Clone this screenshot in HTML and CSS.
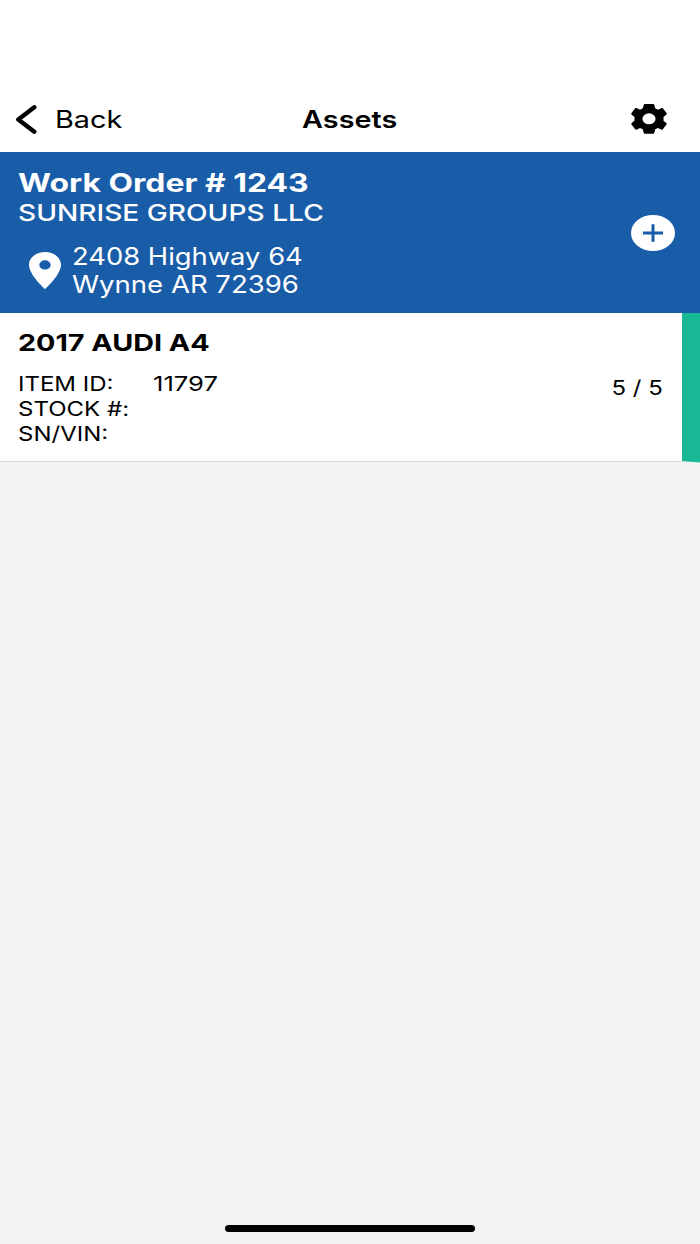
FILE: index.html
```html
<!DOCTYPE html>
<html lang="en">
<head>
    <meta charset="UTF-8">
    <meta name="viewport" content="width=device-width, initial-scale=1.0">
    <title>Assets</title>
    <link rel="stylesheet" href="styles.css">
</head>
<body>
    <header class="navbar">
        <div class="back">
            <svg class="chevron" width="22" height="30" viewBox="0 0 22 30">
                <path d="M19.3 2.3L3.3 14.5L19.3 26.7" fill="none" stroke="#000" stroke-width="4.4" stroke-linecap="round" stroke-linejoin="round"/>
            </svg>
            <span class="text back-label">Back</span>
        </div>
        <h1 class="text title">Assets</h1>
        <svg class="gear" width="36" height="30" viewBox="0 0 104 90" preserveAspectRatio="none">
            <path fill-rule="evenodd" d="M37 2Q37 0 40 0H64Q67 0 67 2L70 13L78 17L88 12Q90 11 92 13L103 28Q104 30 102 32L94 39V50L102 57Q104 59 103 61L92 76Q90 78 88 77L78 72L70 76L67 87Q67 89 64 89H40Q37 89 37 87L34 76L26 72L16 77Q14 78 12 76L1 61Q0 59 2 57L10 50V39L2 32Q0 30 1 28L12 13Q14 11 16 12L26 17L34 13ZM52 28A19 16.5 0 1 0 52 61A19 16.5 0 1 0 52 28Z"/>
        </svg>
    </header>

    <section class="order">
        <div class="order-info">
            <h2 class="text order-number">Work Order # 1243</h2>
            <div class="text customer">SUNRISE GROUPS LLC</div>
            <div class="address">
                <svg class="pin" width="32" height="37" viewBox="5 2 14 20" preserveAspectRatio="none">
                    <path fill="#fff" d="M12 2C8.13 2 5 5.13 5 9c0 5.25 7 13 7 13s7-7.75 7-13c0-3.87-3.13-7-7-7zm0 9.5a2.5 2.5 0 0 1 0-5 2.5 2.5 0 0 1 0 5z"/>
                </svg>
                <div>
                    <div class="text street">2408 Highway 64</div>
                    <div class="text city">Wynne AR 72396</div>
                </div>
            </div>
        </div>
        <svg class="add" width="44" height="36" viewBox="0 0 44 36">
            <ellipse cx="22" cy="18" rx="22" ry="18" fill="#fff"/>
            <path d="M12 18H32M22 9.3V26.7" stroke="#195ca8" stroke-width="3"/>
        </svg>
    </section>

    <main class="asset">
        <div class="asset-info">
            <h3 class="text asset-name">2017 AUDI A4</h3>
            <div class="details">
                <span class="text">ITEM ID:</span>
                <span class="text item-value">11797</span>
                <span class="text">STOCK #:</span>
                <span></span>
                <span class="text">SN/VIN:</span>
            </div>
        </div>
        <span class="text count">5 / 5</span>
        <svg class="status" width="18" height="150" viewBox="0 0 18 150">
            <path d="M0 0H18V149.5L0 148Z" fill="#19b894"/>
        </svg>
    </main>

    <div class="home-indicator"></div>
</body>
</html>
```
FILE: styles.css
```css
* {
    box-sizing: border-box;
}

body {
    margin: 0;
    height: 1244px;
    display: flex;
    flex-direction: column;
    background-color: #f3f3f1;
    font-family: 'Inter', sans-serif;
    color: #000;
    overflow: hidden;
}

h1, h2, h3 {
    margin: 0;
}

/* wide lettering */
.text {
    width: max-content;
    white-space: nowrap;
    transform: scaleX(1.2);
    transform-origin: left center;
}

.navbar {
    height: 152px;
    padding: 87px 33px 0 15px;
    display: grid;
    grid-template-columns: 1fr auto 1fr;
    align-items: center;
    background-color: #fff;
}

.back {
    display: flex;
    align-items: center;
    gap: 18px;
    font-size: 24px;
}

.title {
    font-size: 24px;
    font-weight: 600;
    transform-origin: center;
    margin-left: 18px;
}

.gear {
    justify-self: end;
    margin-bottom: 1px;
}

.order {
    height: 161px;
    padding: 16px 25px 0 18px;
    display: flex;
    justify-content: space-between;
    background-color: #195ca8;
    color: #fff;
}

.order-number {
    font-size: 25.5px;
    font-weight: 700;
    line-height: 30px;
    transform: scaleX(1.25);
}

.customer {
    font-size: 23px;
    font-weight: 500;
    line-height: 30px;
    transform: scaleX(1.223);
}

.address {
    display: flex;
    gap: 11px;
    margin-top: 15px;
    padding-left: 11px;
    font-size: 24px;
    line-height: 28px;
}

.street {
    transform: scaleX(1.14);
}

.city {
    transform: scaleX(1.147);
}

.pin {
    margin-top: 9px;
}

.add {
    margin-top: 47px;
}

.asset {
    height: 149px;
    display: flex;
    background-color: #fff;
    border-bottom: 1px solid #dadada;
}

.asset-info {
    flex: 1;
    padding: 15px 0 0 18px;
}

.asset-name {
    font-size: 23px;
    font-weight: 700;
    line-height: 30px;
    transform: scaleX(1.248);
}

.details {
    display: grid;
    grid-template-columns: 135px auto;
    margin-top: 14px;
    font-size: 20px;
    line-height: 25px;
}

.item-value {
    transform: scaleX(1.28);
}

.count {
    font-size: 20px;
    line-height: 24px;
    margin: 63px 19px 0 0;
    transform-origin: right center;
}

.status {
    flex: none;
}

.home-indicator {
    width: 250px;
    height: 7px;
    margin: auto auto 12px;
    border-radius: 4px;
    background-color: #000;
}
```
